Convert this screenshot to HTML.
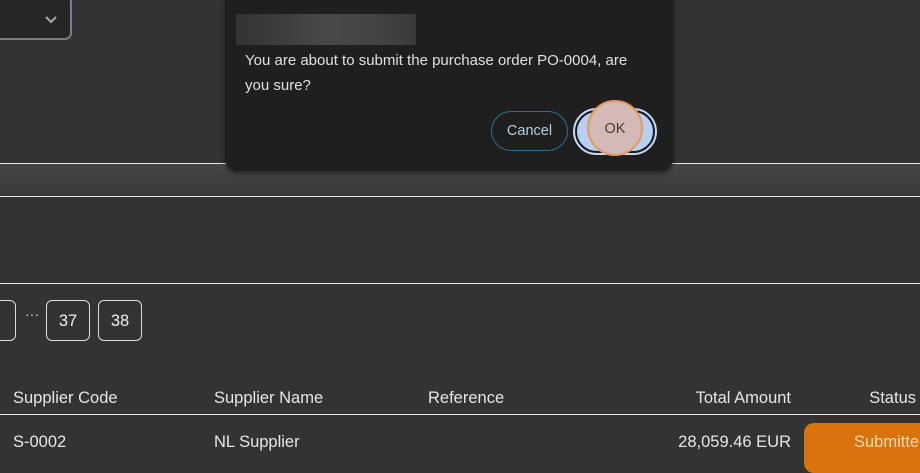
<!DOCTYPE html>
<html><head><style>
*{margin:0;padding:0;box-sizing:border-box}
body{width:920px;height:460px;background:#333;overflow:hidden;position:relative;font-family:"Liberation Sans","DejaVu Sans",sans-serif;color:#e6e6e6}
.a{position:absolute}
.hl{position:absolute;left:0;width:920px;height:1px;background:#e8e8e8}
.pg{position:absolute;top:300px;width:44px;height:41px;border:1px solid #ddd;border-radius:6px;font-size:16.5px;text-align:center;line-height:41px;color:#eee}
.th{position:absolute;top:389px;font-size:16.5px;color:#e6e6e6;white-space:nowrap}
.td{position:absolute;top:433px;font-size:16.5px;color:#e6e6e6;white-space:nowrap}
</style></head><body>
<div class="a" style="left:-10px;top:-5px;width:82px;height:45px;background:#262626;border:2px solid #7a8088;border-radius:7px"></div>
<svg class="a" style="left:44px;top:14px" width="14" height="10"><path d="M2 3 L7 8 L12 3" stroke="#aaa" stroke-width="2" fill="none"/></svg>
<div class="hl" style="top:163px"></div>
<div class="a" style="left:0;top:164px;width:920px;height:32px;background:linear-gradient(#474747,#383838)"></div>
<div class="hl" style="top:196px"></div>
<div class="hl" style="top:283px"></div>
<div class="pg" style="left:-28px">8</div>
<div class="a" style="left:25px;top:306px;font-size:14px;color:#ddd">···</div>
<div class="pg" style="left:46px">37</div>
<div class="pg" style="left:98px">38</div>
<div class="th" style="left:13px">Supplier Code</div>
<div class="th" style="left:214px">Supplier Name</div>
<div class="th" style="left:428px">Reference</div>
<div class="th" style="right:129px">Total Amount</div>
<div class="th" style="right:4px">Status</div>
<div class="hl" style="top:414px"></div>
<div class="td" style="left:13px">S-0002</div>
<div class="td" style="left:214px">NL Supplier</div>
<div class="td" style="right:129px">28,059.46 EUR</div>
<div class="a" style="left:804px;top:423px;width:140px;height:50px;background:#d9730d;border-radius:10px;color:#f7d9b0;font-size:16.5px;padding:10px 0 0 50px">Submitted</div>

<div class="a" style="left:225px;top:-12px;width:448px;height:183px;background:#1f1f1f;border-radius:12px;box-shadow:0 2px 6px rgba(0,0,0,.5)"></div>
<div class="a" style="left:236px;top:14px;width:180px;height:31px;background:linear-gradient(90deg,#333,#3d3d3d,#484848,#444,#3a3a3a)"></div>
<div class="a" style="left:245px;top:48px;width:395px;font-size:15px;line-height:25px;color:#e0e0e0">You are about to submit the purchase order PO-0004, are you sure?</div>
<div class="a" style="left:491px;top:111px;width:77px;height:40px;border:1px solid #2f6f8f;border-radius:20px;font-size:14.5px;line-height:38px;text-align:center;color:#b8cbe0">Cancel</div>
<div class="a" style="left:573px;top:108px;width:84px;height:47px;border:2px solid #c8d8f0;border-radius:24px;background:#0f1a2a;padding:2px">
<div style="width:76px;height:39px;border-radius:20px;background:#b9cff2"></div></div>
<div class="a" style="left:587px;top:100px;width:56px;height:56px;border-radius:50%;background:#d4b9b6;border:2px solid #e39a58"></div>
<div class="a" style="left:587px;top:121px;width:56px;text-align:center;font-size:14.5px;color:#4a3a3a">OK</div>
</body></html>
